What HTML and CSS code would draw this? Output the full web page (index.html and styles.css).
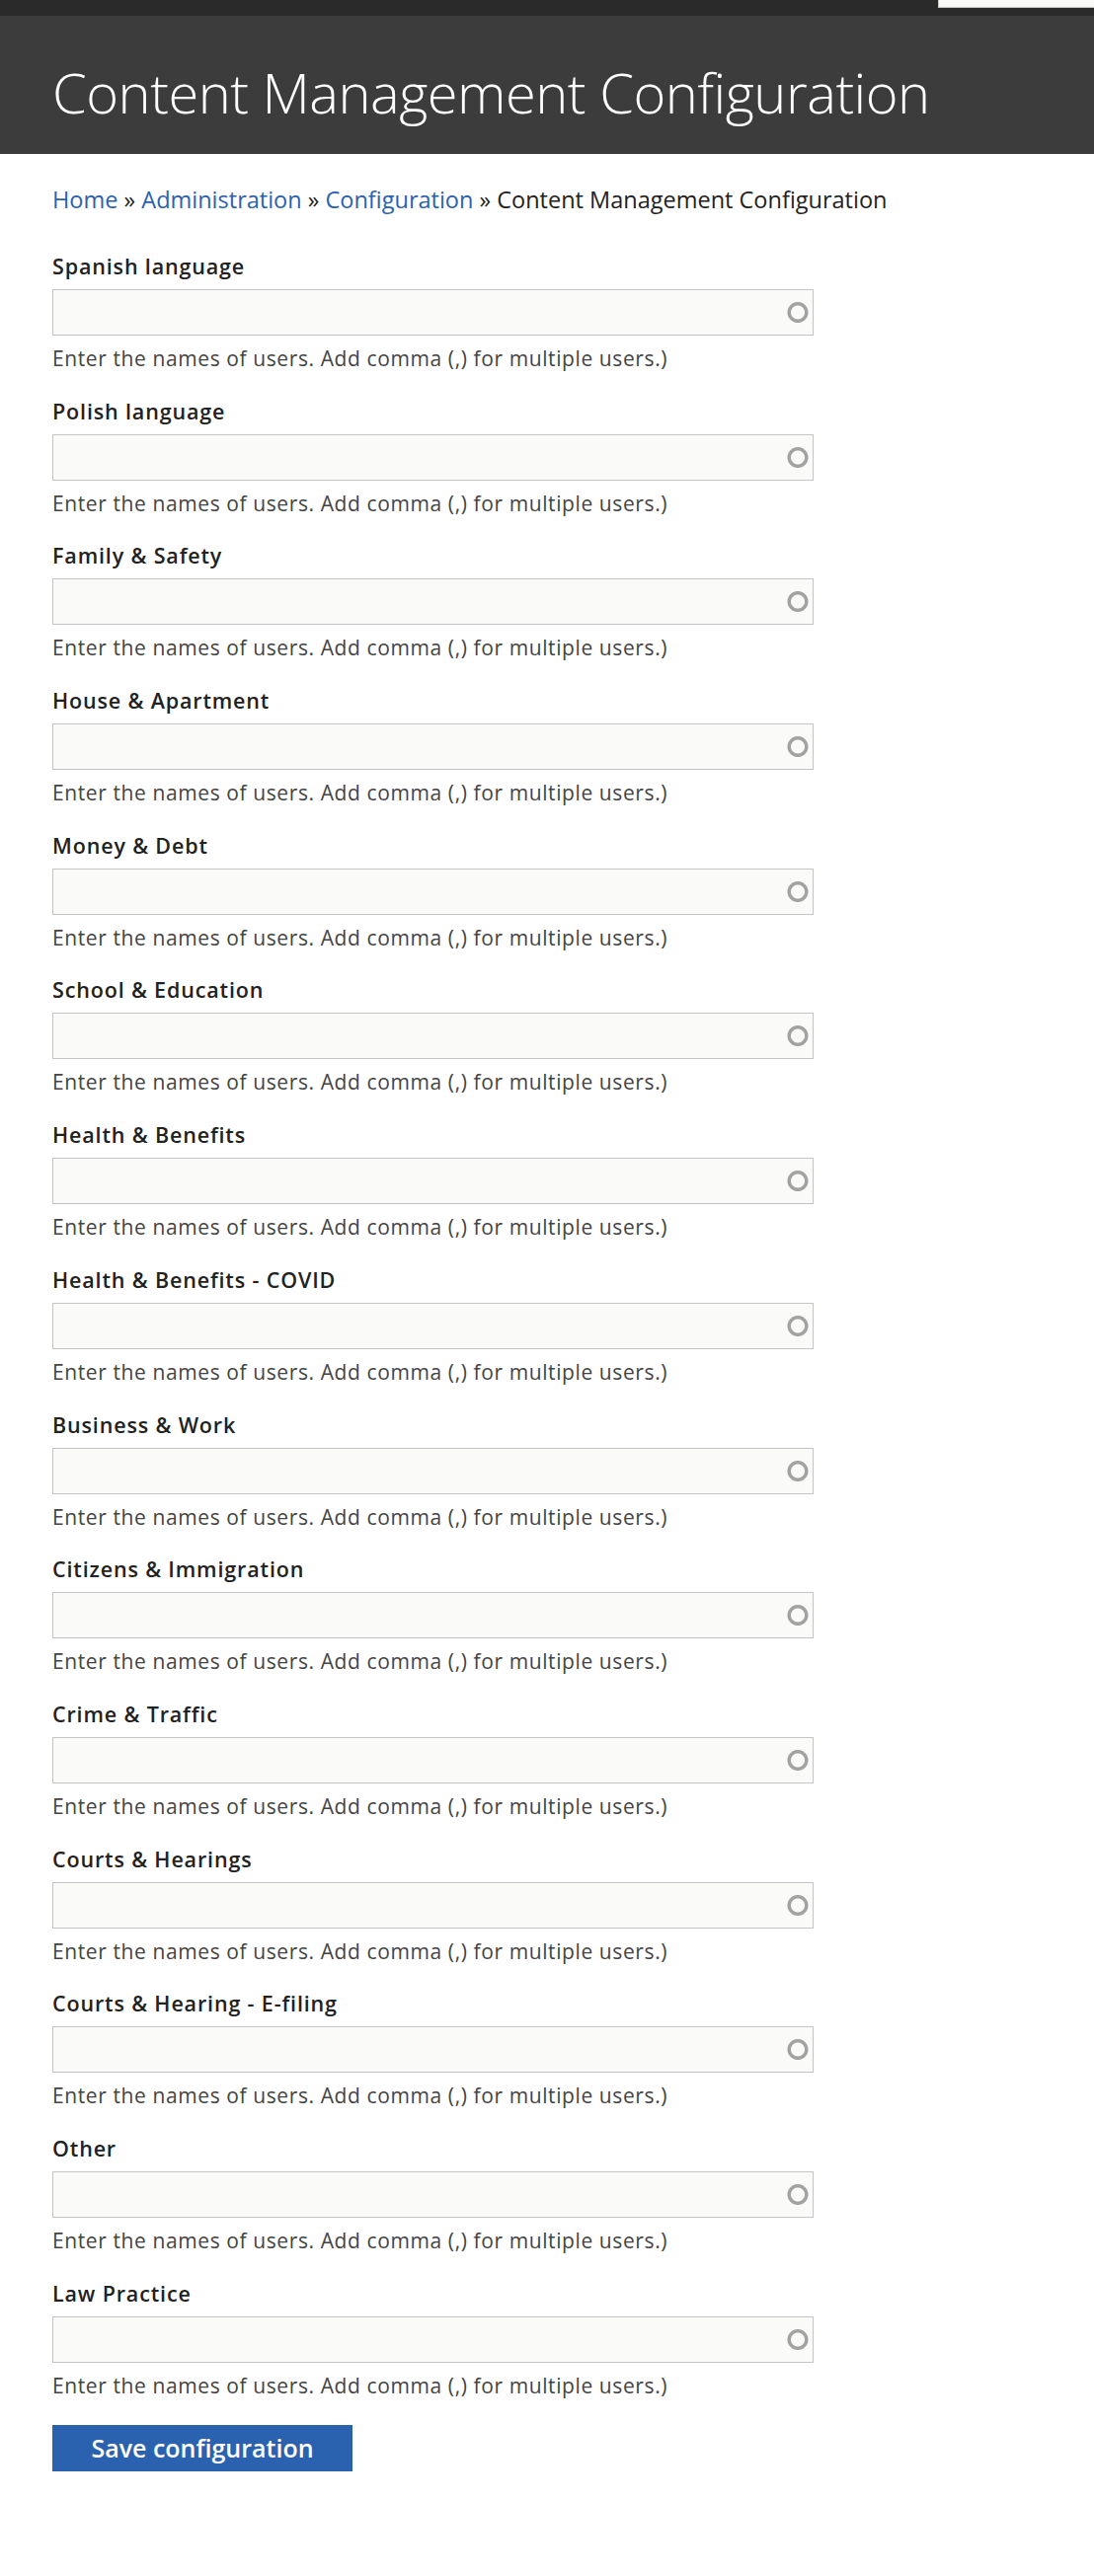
FILE: index.html
```html
<!DOCTYPE html>
<html lang="en">
<head>
<meta charset="utf-8">
<title>Content Management Configuration</title>
<link rel="stylesheet" href="styles.css">
</head>
<body>
<div class="topbar"><div class="topbar-box"></div></div>
<header class="page-header">
  <h1 class="page-title">Content Management Configuration</h1>
</header>
<main class="content">
  <nav class="breadcrumb"><a href="#">Home</a> » <a href="#">Administration</a> » <a href="#">Configuration</a> » Content Management Configuration</nav>
  <form class="config-form">
    <div class="field"><label class="field-label">Spanish language</label><input class="field-input" type="text"><div class="field-desc">Enter the names of users. Add comma (,) for multiple users.)</div></div>
    <div class="field"><label class="field-label">Polish language</label><input class="field-input" type="text"><div class="field-desc">Enter the names of users. Add comma (,) for multiple users.)</div></div>
    <div class="field"><label class="field-label">Family &amp; Safety</label><input class="field-input" type="text"><div class="field-desc">Enter the names of users. Add comma (,) for multiple users.)</div></div>
    <div class="field"><label class="field-label">House &amp; Apartment</label><input class="field-input" type="text"><div class="field-desc">Enter the names of users. Add comma (,) for multiple users.)</div></div>
    <div class="field"><label class="field-label">Money &amp; Debt</label><input class="field-input" type="text"><div class="field-desc">Enter the names of users. Add comma (,) for multiple users.)</div></div>
    <div class="field"><label class="field-label">School &amp; Education</label><input class="field-input" type="text"><div class="field-desc">Enter the names of users. Add comma (,) for multiple users.)</div></div>
    <div class="field"><label class="field-label">Health &amp; Benefits</label><input class="field-input" type="text"><div class="field-desc">Enter the names of users. Add comma (,) for multiple users.)</div></div>
    <div class="field"><label class="field-label">Health &amp; Benefits - COVID</label><input class="field-input" type="text"><div class="field-desc">Enter the names of users. Add comma (,) for multiple users.)</div></div>
    <div class="field"><label class="field-label">Business &amp; Work</label><input class="field-input" type="text"><div class="field-desc">Enter the names of users. Add comma (,) for multiple users.)</div></div>
    <div class="field"><label class="field-label">Citizens &amp; Immigration</label><input class="field-input" type="text"><div class="field-desc">Enter the names of users. Add comma (,) for multiple users.)</div></div>
    <div class="field"><label class="field-label">Crime &amp; Traffic</label><input class="field-input" type="text"><div class="field-desc">Enter the names of users. Add comma (,) for multiple users.)</div></div>
    <div class="field"><label class="field-label">Courts &amp; Hearings</label><input class="field-input" type="text"><div class="field-desc">Enter the names of users. Add comma (,) for multiple users.)</div></div>
    <div class="field"><label class="field-label">Courts &amp; Hearing - E-filing</label><input class="field-input" type="text"><div class="field-desc">Enter the names of users. Add comma (,) for multiple users.)</div></div>
    <div class="field"><label class="field-label">Other</label><input class="field-input" type="text"><div class="field-desc">Enter the names of users. Add comma (,) for multiple users.)</div></div>
    <div class="field"><label class="field-label">Law Practice</label><input class="field-input" type="text"><div class="field-desc">Enter the names of users. Add comma (,) for multiple users.)</div></div>
    <button class="save-btn" type="button">Save configuration</button>
  </form>
</main>
</body>
</html>
```
FILE: styles.css
```css
html, body {
  margin: 0;
  padding: 0;
  background: #ffffff;
}
body {
  font-family: "Open Sans", "Noto Sans", sans-serif;
  color: #222222;
}
.topbar {
  height: 16px;
  background: #2a2a2a;
  display: flex;
  justify-content: flex-end;
}
.topbar-box {
  width: 157px;
  height: 7px;
  background: #f9f9f7;
  border-bottom: 1px solid #c8c8c8;
  border-left: 1px solid #c8c8c8;
}
.page-header {
  height: 140px;
  box-sizing: border-box;
  background: #3c3c3c;
  padding: 39px 0 0 53px;
}
.page-title {
  margin: 0;
  font-size: 56px;
  line-height: 76px;
  font-weight: 300;
  color: #ffffff;
  letter-spacing: -0.5px;
}
.content {
  padding: 30px 0 0 53px;
}
.breadcrumb {
  font-size: 23.5px;
  line-height: 32px;
  color: #222222;
}
.breadcrumb a {
  color: #2a62b0;
  text-decoration: none;
}
.config-form {
  margin-top: 38px;
  display: flex;
  flex-direction: column;
  align-items: flex-start;
}
.field {
  display: flex;
  flex-direction: column;
  margin-bottom: 25.7px;
}
.field-label {
  font-size: 21.5px;
  line-height: 28px;
  font-weight: 600;
  letter-spacing: 0.85px;
  color: #222222;
  margin-bottom: 9px;
}
.field-input {
  width: 771px;
  height: 47px;
  box-sizing: border-box;
  margin: 0;
  border: 1px solid #c4c4c4;
  border-radius: 0;
  background-color: #fafaf8;
  background-image: radial-gradient(circle at calc(100% - 15px) 50%, rgba(160,160,160,0) 6.5px, #a2a2a2 7.5px, #a2a2a2 10px, rgba(160,160,160,0) 11px);
  font-family: inherit;
  font-size: 20px;
  padding: 0 40px 0 10px;
  outline: none;
}
.field-desc {
  margin-top: 9px;
  font-size: 21px;
  line-height: 28px;
  letter-spacing: 0.6px;
  color: #444444;
}
.save-btn {
  margin-top: 0.5px;
  width: 304px;
  height: 47px;
  border: 0;
  border-radius: 0;
  background: #2a62b0;
  color: #ffffff;
  font-family: inherit;
  font-size: 25px;
  font-weight: 600;
  padding: 0;
  cursor: pointer;
}
```
